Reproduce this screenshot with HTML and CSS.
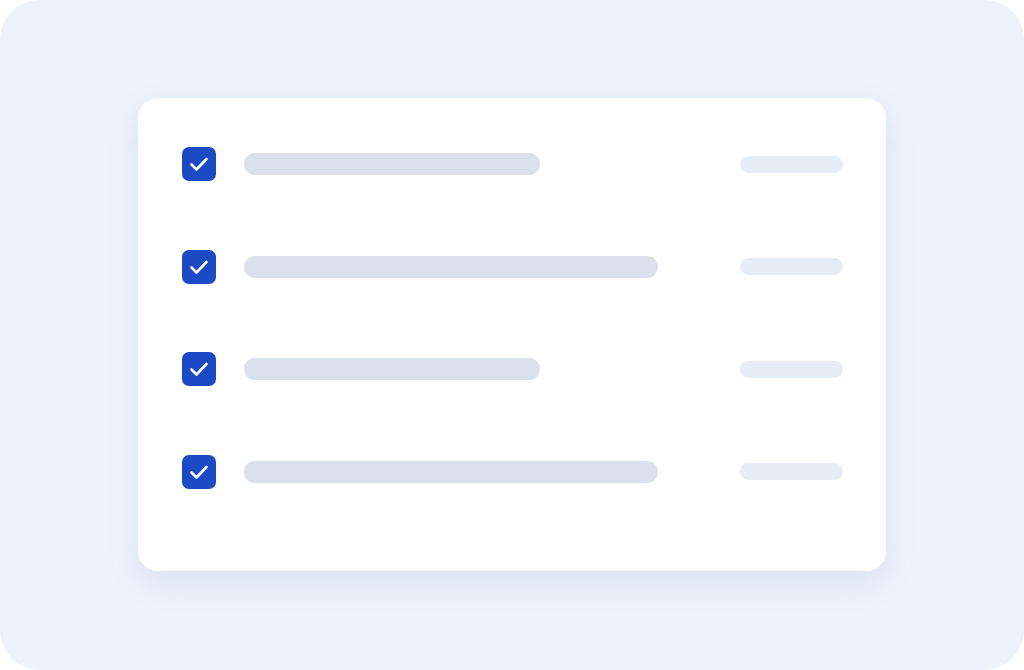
FILE: index.html
```html
<!DOCTYPE html>
<html lang="en">
<head>
  <meta charset="UTF-8">
  <meta name="viewport" content="width=device-width, initial-scale=1.0">
  <title>Task list</title>
  <link rel="stylesheet" href="styles.css">
</head>
<body>
  <div class="frame">
    <div class="card">
      <div class="row">
        <span class="check"><svg viewBox="0 0 34 34"><path d="M9.5 17.5 L14.5 22.5 L24.5 12"/></svg></span>
        <span class="bar short"></span>
        <span class="meta"></span>
      </div>
      <div class="row">
        <span class="check"><svg viewBox="0 0 34 34"><path d="M9.5 17.5 L14.5 22.5 L24.5 12"/></svg></span>
        <span class="bar long"></span>
        <span class="meta"></span>
      </div>
      <div class="row">
        <span class="check"><svg viewBox="0 0 34 34"><path d="M9.5 17.5 L14.5 22.5 L24.5 12"/></svg></span>
        <span class="bar short"></span>
        <span class="meta"></span>
      </div>
      <div class="row">
        <span class="check"><svg viewBox="0 0 34 34"><path d="M9.5 17.5 L14.5 22.5 L24.5 12"/></svg></span>
        <span class="bar long"></span>
        <span class="meta"></span>
      </div>
    </div>
  </div>
</body>
</html>
```

FILE: styles.css
```css
* {
  margin: 0;
  padding: 0;
  box-sizing: border-box;
}

body {
  font-family: "Inter", "Liberation Sans", sans-serif;
  background: #ffffff;
  width: 1024px;
  height: 670px;
  overflow: hidden;
}

.frame {
  width: 1024px;
  height: 670px;
  background: #eef2fc;
  border-radius: 40px;
  padding: 98px 138px 99px;
  display: flex;
}

.card {
  flex: 1;
  background: #ffffff;
  border-radius: 20px;
  box-shadow: 0 12px 30px rgba(120, 140, 190, 0.16);
  padding: 49px 43px 0 44px;
  display: flex;
  flex-direction: column;
  gap: 68.5px;
}

.row {
  height: 34px;
  display: flex;
  align-items: center;
}

.check {
  width: 34px;
  height: 34px;
  border-radius: 7px;
  background: #1b4ac4;
  flex-shrink: 0;
  margin-right: 28px;
}

.check svg {
  width: 34px;
  height: 34px;
  display: block;
  fill: none;
  stroke: #ffffff;
  stroke-width: 2.6;
  stroke-linecap: round;
  stroke-linejoin: round;
}

.bar {
  height: 22px;
  border-radius: 11px;
  background: #dbe0ec;
}

.bar.short {
  width: 296px;
}

.bar.long {
  width: 414px;
}

.meta {
  margin-left: auto;
  width: 103px;
  height: 17px;
  border-radius: 9px;
  background: #e8ecf6;
}
```
